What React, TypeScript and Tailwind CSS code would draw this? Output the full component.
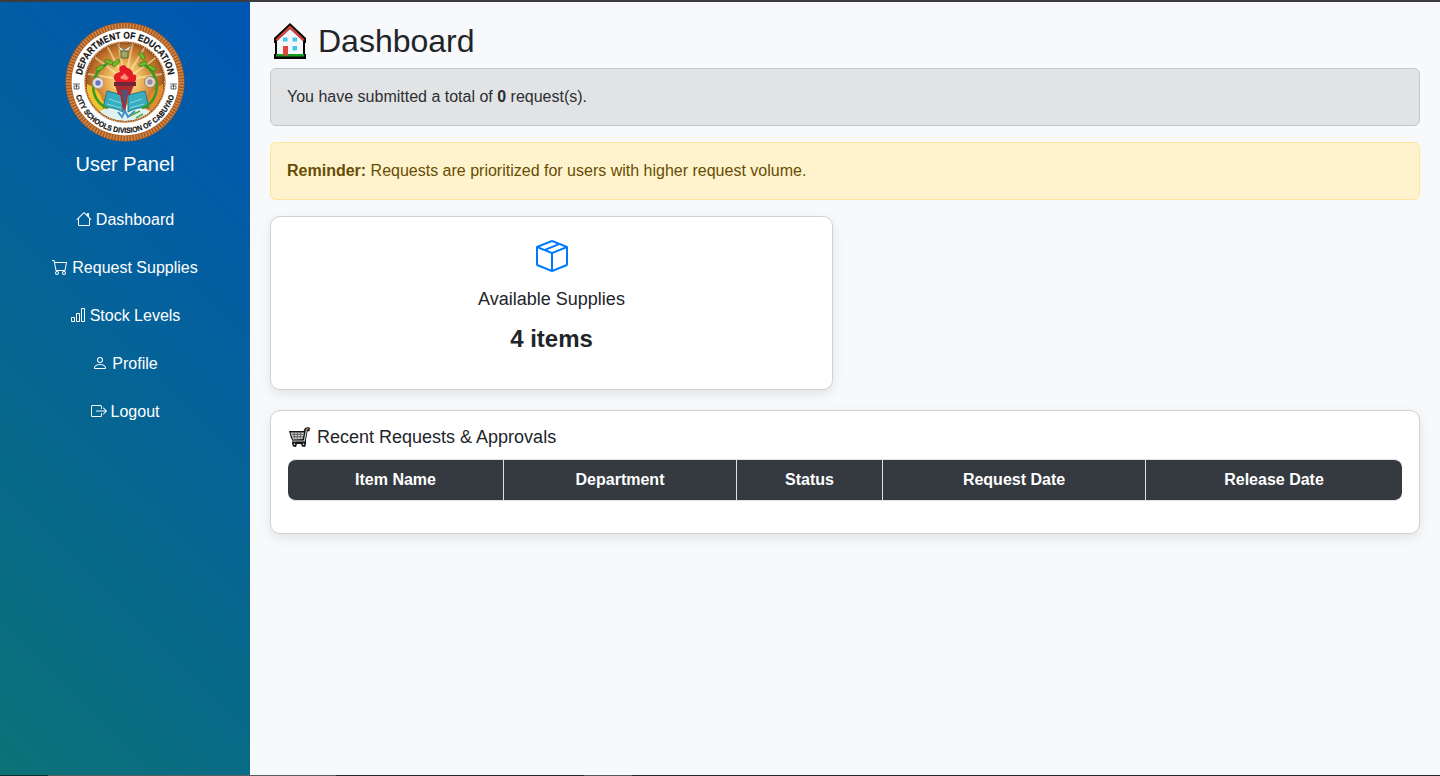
import { BsHouse, BsCart, BsBarChart, BsPerson, BsBoxArrowRight, BsBoxSeam } from 'react-icons/bs';
import type { ReactNode } from 'react';

const leaves = [
  [31, 58, -60], [35, 46, -30], [44, 40, 20], [51, 41, -40],
  [89, 58, 60], [87, 46, 30], [78, 42, -20], [77, 34, 60],
];

function Seal() {
  return (
    <svg viewBox="0 0 120 120" className="size-[120px]" role="img">
      <defs>
        <radialGradient id="glow" cx="50%" cy="48%" r="55%">
          <stop offset="0" stopColor="#fff3b8" />
          <stop offset="0.35" stopColor="#f0bd62" />
          <stop offset="0.75" stopColor="#c4742a" />
          <stop offset="1" stopColor="#8f4d1e" />
        </radialGradient>
        <clipPath id="disc"><circle cx="60" cy="60" r="39" /></clipPath>
        <path id="arcTop" d="M16.500 60a43.500 43.500 0 0 1 87 0" />
        <path id="arcBottom" d="M9 60a51 51 0 0 0 102 0" />
      </defs>
      <circle cx="60" cy="60" r="59.5" fill="#a9581f" />
      <circle cx="60" cy="60" r="56.4" fill="none" stroke="#d08a4c" strokeWidth="5" strokeDasharray="1.5 1.5" />
      <circle cx="60" cy="60" r="53.4" fill="#fff" />
      <circle cx="60" cy="60" r="40.5" fill="#8c4a1c" />
      <circle cx="60" cy="60" r="40" fill="none" stroke="#dfa468" strokeWidth="2" strokeDasharray="1.3 1.3" />
      <g clipPath="url(#disc)">
        <circle cx="60" cy="60" r="38.5" fill="url(#glow)" />
        <g stroke="#fff2c0" strokeWidth="1.8" opacity=".55">
          <path d="M60 58 28 34M60 58 42 24M60 58 53 20M60 58 68 20M60 58 80 25M60 58 92 35M60 58 97 52M60 58 23 52" />
        </g>
        <path d="M22 62q12 4 16 17l9 10-4 6-22-14z" fill="#f0c22c" />
        <path d="M98 62q-12 6-15 17l-12 12 6 5 23-16z" fill="#e88a30" />
        <path d="M35 89q24-13 50 0l-6 12H41z" fill="#dff2ee" />
        <path d="m42 69 16 4v17q-11-6-20-4zM80 69l-17 4v17q11-6 21-4z" fill="#36aebf" stroke="#176b82" strokeWidth=".8" />
        <path d="m44 77 12 4M42 82l14 4M77 77l-12 4M79 82l-14 4" stroke="#a4e3e2" strokeWidth=".8" />
        <path d="M42 42C22 53 25 80 43 86M78 42c20 11 17 38-1 44" fill="none" stroke="#379b25" strokeWidth="2.6" />
        {leaves.map(([x, y, angle], i) => (
          <ellipse key={i} cx={x} cy={y} rx="4.6" ry="2" fill="#79b825" stroke="#317f20" strokeWidth=".7" transform={`rotate(${angle} ${x} ${y})`} />
        ))}
        <circle cx="33" cy="61" r="5.500" fill="#e6e2ef" stroke="#bd9a6d" />
        <circle cx="33" cy="61" r="2.700" fill="#6674bb" />
        <circle cx="85" cy="60" r="5.500" fill="#ddd9cc" stroke="#a38462" />
        <circle cx="85" cy="60" r="2.700" fill="#978da0" />
        <path d="m52 23 7 5 8-5-4 6h-7z" fill="#eef0e2" stroke="#777650" strokeWidth=".7" />
        <path d="M56 29h7v7h-7z" fill="#a5a663" stroke="#57653a" />
        <path d="M50 63h19l-4 10h-2l-3 18h-1l-4-18h-2z" fill="#a92c30" />
        <path d="M56 68h7l-3 17z" fill="#56507d" />
        <path d="M49 60h22v4H49z" fill="#6f2636" />
        <path d="M51 60c-5-6-1-9 4-10-2-4 0-7 5-7-1 3 9 3 8 10 4-2 4 4 2 7z" fill="#e51c23" />
        <path d="M56 57c-2-4 3-3 3-6 4 3 2 4 5 4l-2 3z" fill="#ff8b70" />
        <path d="m53 90 4 5 3-6 3 6 7-6" fill="none" stroke="#428fcd" strokeWidth="2" />
        <path d="m65 94 10-5M71 96l7-4" stroke="#56a64a" strokeWidth="1.5" />
      </g>
      <text fill="#111" fontSize="9.6" fontWeight="700" fontFamily="Liberation Sans, sans-serif" stroke="#111" strokeWidth=".2">
        <textPath href="#arcTop" startOffset="50%" textAnchor="middle" textLength="123" lengthAdjust="spacingAndGlyphs">DEPARTMENT OF EDUCATION</textPath>
      </text>
      <text fill="#111" fontSize="7.600" fontWeight="700" fontFamily="Liberation Sans, sans-serif" stroke="#111" strokeWidth=".2">
        <textPath href="#arcBottom" startOffset="50%" textAnchor="middle" textLength="132" lengthAdjust="spacingAndGlyphs">CITY SCHOOLS DIVISION OF CABUYAO</textPath>
      </text>
      <path d="M8 62h7M9 64h5M11.500 62v5M9 64v3M14 64v3M9 67h5M105 62h7M106 64h5M108.500 62v5M106 64v3M111 64v3M106 67h5" fill="none" stroke="#555" strokeWidth=".9" />
    </svg>
  );
}

function HouseEmoji() {
  return (
    <svg viewBox="0 0 32 36" className="mr-3 h-9 w-8 shrink-0">
      <path d="M16 0 32 15v5h-1v11h1v5H0v-5h1V20H0v-5z" fill="#080808" />
      <path d="M3 18 16 6l13 12v14H3z" fill="#f4f6fa" />
      <path d="M1.500 16.500 16 2.500l14.500 14-1.500 1.500L16 5.500 3 18z" fill="#e0463d" />
      <path d="M2 31h28v2.500H2z" fill="#149b22" />
      <path d="M9 14.500h4.500v4H9zM18.500 14.500H23v4h-4.500zM18.500 23H23v4.500h-4.500z" fill="#43c7ea" />
      <path d="M9 23h5v9.500H9z" fill="#df463c" />
    </svg>
  );
}

function CartEmoji() {
  return (
    <svg viewBox="0 0 21 20" className="mr-[7px] h-5 w-[21px] shrink-0 -translate-y-px">
      <path d="M0 4h14.500l1.500-3L19 0l2 1-.5 3-2 .5-1.500 8.500v4l-1 3-3-.5-1-2.500H8l-1 3-3-.5-1-3 .5-3L2 11z" fill="#151515" />
      <path d="M1.500 5.500H15L13.500 12 4 12.500z" fill="#d5d5d8" />
      <path d="M3 7.300h11M3.500 9.800h10" stroke="#444" strokeWidth=".9" />
      <path d="m5 5.500.8 7M8.300 5.500v7M11.500 5.500l-.3 7" stroke="#555" strokeWidth=".8" />
      <path d="M17.500 2.500 15.300 14H5v1" fill="none" stroke="#c7c8cc" strokeWidth="1.200" />
      <path d="m17.500 2.200 2-.7" stroke="#c97862" strokeWidth="1.500" />
      <path d="M4.800 17.300h1.400M13.800 17.300h1.400" stroke="#ddd" strokeWidth="1.500" />
    </svg>
  );
}

function NavItem({ icon, label }: { icon: ReactNode; label: string }) {
  return (
    <a className="flex h-12 items-center justify-center gap-1 text-white">
      <span className="flex pb-0.5">{icon}</span>
      <span>{label}</span>
    </a>
  );
}

export default function App() {
  return (
    <div className="flex h-[776px] flex-col overflow-hidden bg-[#f8f9fa] font-['Liberation_Sans',Arial,sans-serif] text-base text-[#212529]">
      <div className="h-0.5 shrink-0 bg-[#3c3c3e]" />
      <div className="flex min-h-0 flex-1">
        <aside className="w-[250px] shrink-0 bg-[linear-gradient(45deg,#0b7277,#0056b3)] pt-5">
          <div className="flex justify-center"><Seal /></div>
          <h4 className="mt-2.5 text-center text-xl leading-6 text-white">User Panel</h4>
          <nav className="mt-5">
            <NavItem icon={<BsHouse />} label="Dashboard" />
            <NavItem icon={<BsCart />} label="Request Supplies" />
            <NavItem icon={<BsBarChart />} label="Stock Levels" />
            <NavItem icon={<BsPerson />} label="Profile" />
            <NavItem icon={<BsBoxArrowRight />} label="Logout" />
          </nav>
        </aside>
        <main className="flex-1 p-5">
          <h2 className="mb-2 flex h-[38px] items-center pl-1 text-[32px] leading-[38px]">
            <HouseEmoji />
            Dashboard
          </h2>
          <div className="mb-4 h-[58px] rounded-md border border-[#c4c8cb] bg-[#e2e3e5] p-4 text-[#2b2f32]">
            You have submitted a total of <strong>0</strong> request(s).
          </div>
          <div className="mb-4 h-[58px] rounded-md border border-[#ffe69c] bg-[#fff3cd] p-4 text-[#664d03]">
            <strong>Reminder:</strong> Requests are prioritized for users with higher request volume.
          </div>
          <section className="mb-5 flex h-[174px] w-[563px] flex-col items-center rounded-[10px] border border-[#cfd2d5] bg-white pt-[23px] shadow-[0_4px_12px_rgba(0,0,0,0.09)]">
            <BsBoxSeam className="size-8 text-[#007bff]" />
            <h5 className="mt-4 text-lg leading-[22px]">Available Supplies</h5>
            <p className="mt-[11px] text-2xl leading-9 font-bold">4 items</p>
          </section>
          <section className="h-[124px] rounded-[10px] border border-[#cfd2d5] bg-white px-[17px] pt-4 shadow-[0_4px_12px_rgba(0,0,0,0.09)]">
            <h5 className="mb-[11px] flex h-[21px] items-center pl-px text-lg leading-[21px]">
              <CartEmoji />
              Recent Requests &amp; Approvals
            </h5>
            <div className="grid h-[42px] grid-cols-[216px_233px_146px_263px_1fr] divide-x divide-[#dee2e6] overflow-hidden rounded-lg border-y border-[#dee2e6] bg-[#343a40] text-center leading-10 font-bold text-white">
              <div>Item Name</div>
              <div>Department</div>
              <div>Status</div>
              <div>Request Date</div>
              <div>Release Date</div>
            </div>
          </section>
        </main>
      </div>
      <div className="flex h-px shrink-0 bg-[#262a2a]">
        <div className="w-12 bg-[#0c2c2c]" />
        <div className="w-[288px] bg-[#555e60]" />
        <div className="ml-[248px] w-12 bg-[#555a5a]" />
      </div>
    </div>
  );
}
